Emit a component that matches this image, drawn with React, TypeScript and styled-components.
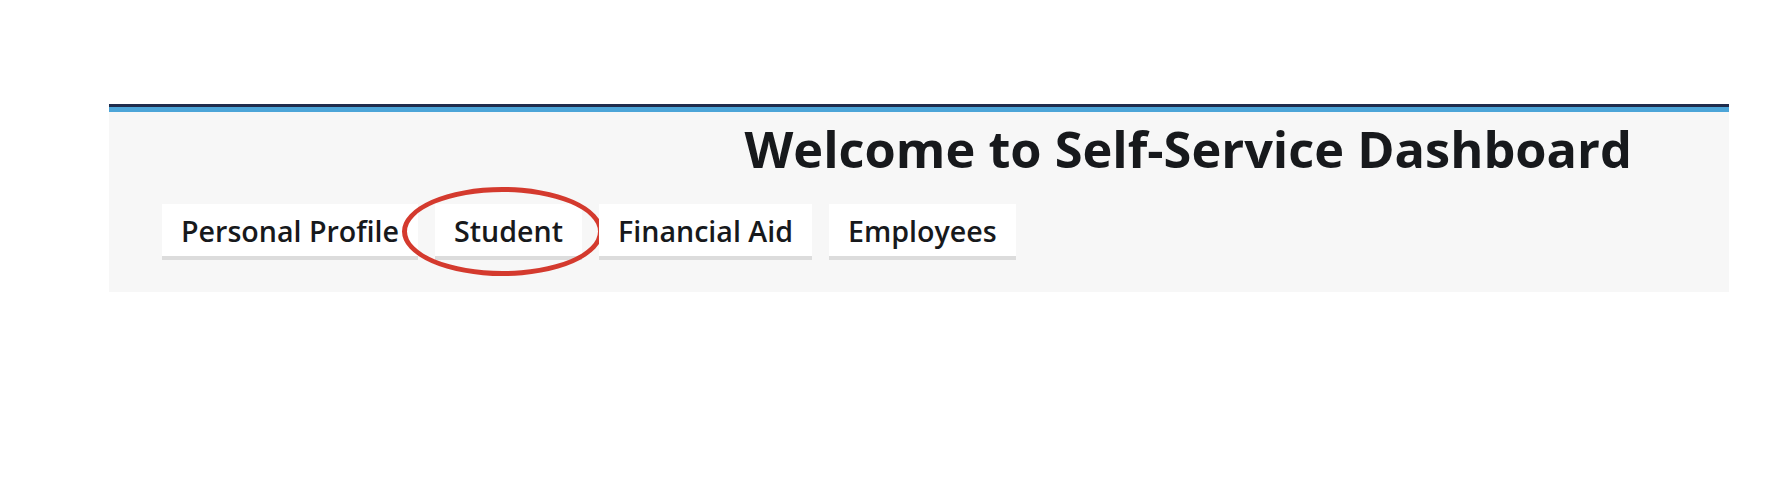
import React from "react";
import styled, { createGlobalStyle } from "styled-components";

const Global = createGlobalStyle`
  html, body { margin: 0; padding: 0; background: #ffffff; }
  body { font-family: "Open Sans", "Liberation Sans", sans-serif; }
`;

const Page = styled.div`
  padding: 104px 0 0 109px;
  width: 1620px;
`;

const Panel = styled.section`
  background: #f7f7f7;
  border-top: 3px solid #1f2c4c;
  box-shadow: inset 0 5px 0 #4ca5d8;
  padding: 6px 97px 32px 53px;
  display: flex;
  flex-direction: column;
`;

const Title = styled.h1`
  margin: 0;
  font-family: "Open Sans", sans-serif;
  font-weight: 700;
  font-size: 50.5px;
  line-height: 72px;
  color: #17191c;
  text-align: right;
`;

const Tabs = styled.nav`
  display: flex;
  gap: 17px;
  margin-top: 19px;
`;

const Tab = styled.div`
  position: relative;
  background: #ffffff;
  border-bottom: 4px solid #dcdcdc;
  height: 52px;
  padding: 0 19px;
  display: flex;
  align-items: center;
  font-family: "Open Sans", sans-serif;
  font-weight: 600;
  font-size: 28.6px;
  color: #17191c;
  white-space: nowrap;
`;

const Highlight = styled.span`
  position: absolute;
  left: -33px;
  top: -17px;
  width: 201px;
  height: 89px;
  box-sizing: border-box;
  border: 5px solid #d43a2e;
  border-radius: 50%;
  pointer-events: none;
`;

const tabs = ["Personal Profile", "Student", "Financial Aid", "Employees"];

export default function App() {
  return (
    <>
      <Global />
      <Page>
        <Panel>
          <Title>Welcome to Self-Service Dashboard</Title>
          <Tabs>
            {tabs.map((t) => (
              <Tab key={t}>
                {t}
                {t === "Student" && <Highlight />}
              </Tab>
            ))}
          </Tabs>
        </Panel>
      </Page>
    </>
  );
}
